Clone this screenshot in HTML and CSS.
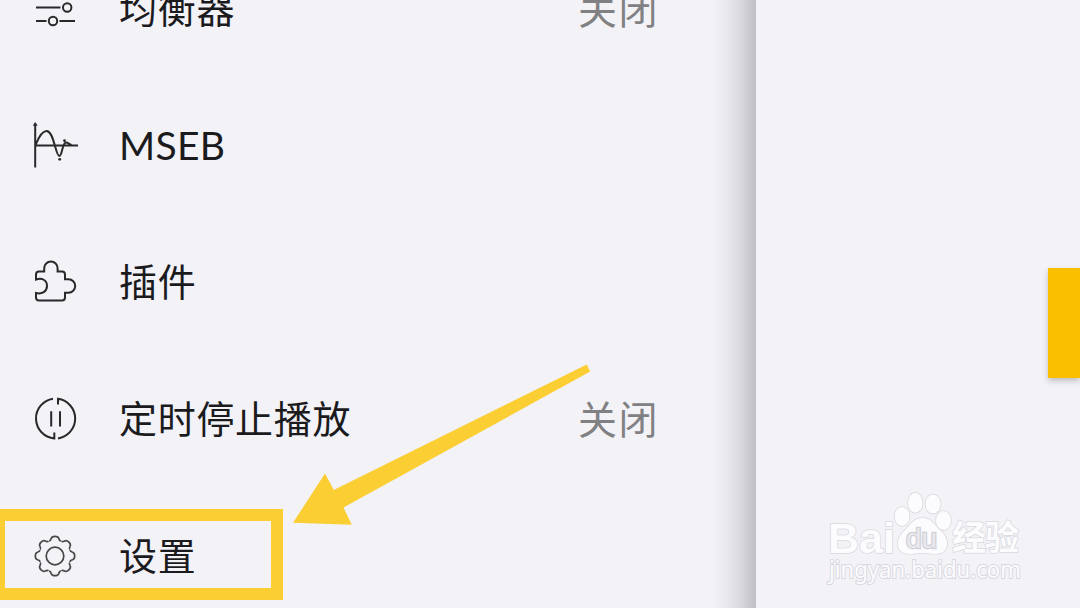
FILE: index.html
```html
<!DOCTYPE html>
<html lang="zh-CN">
	<head>
		<meta charset="UTF-8">
		<title>设置</title>
		<link rel="stylesheet" href="styles.css">
	</head>
	<body>
		<div class="screen">
			<div class="drawer">
				<ul class="menu">
					<li>
						<svg class="icon" viewBox="0 0 46 46">
							<path d="M4 8.500h8M21 8.500h22M4 22.500h24.500M4 36h10.500M27.500 36h15.500"/>
							<circle cx="16.500" cy="8.500" r="4.200"/>
							<circle cx="35.200" cy="22.500" r="4.200"/>
							<circle cx="21" cy="36" r="4.200"/>
						</svg>
						<span class="name">均衡器</span>
						<span class="state">关闭</span>
					</li>
					<li>
						<svg class="icon" viewBox="0 0 46 46">
							<path d="M3.200 1.500V45.500M3.200 23.600H46M3.800 22.500C7 14.500 11 9 14.600 9C22 9 23.500 34 27.300 34C30.500 34 30 20.500 34 20.500C36.500 20.500 36.500 22 39.500 23"/>
							<path class="dot" d="M3.200 0L5.600 3.800H.8z"/>
							<circle class="dot" cx="27.700" cy="37.300" r="1.400"/>
							<circle class="dot" cx="32.500" cy="18.700" r="1.400"/>
						</svg>
						<span class="name latin">MSEB</span>
					</li>
					<li>
						<svg class="icon" viewBox="0 0 46 46">
							<path d="M4 19.500V15.500Q4 12.500 7 12.500H12.200V9.200A6.700 6.700 0 0 1 25.600 9.200V12.500H30Q33 12.500 33 15.500V20.300H36.500A6.700 6.700 0 0 1 36.500 33.700H33V38.500Q33 41.500 30 41.500H7Q4 41.500 4 38.500V34C10 35.500 15 32.500 15 27C15 21 10 18.500 4 20.500z"/>
						</svg>
						<span class="name">插件</span>
					</li>
					<li>
						<svg class="icon" viewBox="0 0 46 46">
							<path d="M21 2.700A20 20 0 0 0 22.300 42.400V36.500M26 8.500V2.800A20 20 0 0 1 26 42.400M19.200 15.200V30.500M28 15.200V30.500"/>
						</svg>
						<span class="name">定时停止播放</span>
						<span class="state">关闭</span>
					</li>
					<li>
						<svg class="icon gear" viewBox="-23 -23 46 46">
							<defs>
								<path id="tooth" d="M-5.900 -15.100C-4.700 -15.100 -4.200 -15.900 -3.800 -17.500C-3 -20.400 3 -20.400 3.800 -17.500C4.200 -15.900 4.700 -15.100 5.900 -15.100"/>
							</defs>
							<use href="#tooth"/>
							<use href="#tooth" transform="rotate(45)"/>
							<use href="#tooth" transform="rotate(90)"/>
							<use href="#tooth" transform="rotate(135)"/>
							<use href="#tooth" transform="rotate(180)"/>
							<use href="#tooth" transform="rotate(225)"/>
							<use href="#tooth" transform="rotate(270)"/>
							<use href="#tooth" transform="rotate(315)"/>
							<circle r="8.800"/>
						</svg>
						<span class="name">设置</span>
					</li>
				</ul>
			</div>
			<div class="page">
				<div class="tab"></div>
			</div>
			<div class="frame"></div>
			<svg class="arrow" viewBox="0 0 300 162">
				<path d="M293.700 1.500L297.200 8.500L50.500 144.500L58.800 161.800L0 159.800L32 110.500L40.800 127z"/>
			</svg>
			<svg class="logo" viewBox="0 0 220 115">
				<text class="bai" x="13" y="72.500" textLength="67" lengthAdjust="spacingAndGlyphs">Bai</text>
				<ellipse cx="87" cy="36.500" rx="7.500" ry="9.500"/>
				<ellipse cx="100.300" cy="22.800" rx="7.300" ry="10"/>
				<ellipse cx="118" cy="24" rx="7.600" ry="9.500"/>
				<ellipse cx="128.500" cy="40.500" rx="7.500" ry="9.500"/>
				<path d="M107.500 38C98 38 96 45 90 50C82 57 81 66 85.500 71C91 76 99 73 107.500 73C116 73 124 76 129.500 71C134 66 133 57 125 50C119 45 117 38 107.500 38z"/>
				<text class="du" x="91" y="67.500" textLength="31" lengthAdjust="spacingAndGlyphs">du</text>
				<text class="jy" x="137" y="70" textLength="67">经验</text>
				<text class="url" x="14" y="98" textLength="192" lengthAdjust="spacingAndGlyphs">jingyan.baidu.com</text>
			</svg>
		</div>
	</body>
</html>
```
FILE: styles.css
```css
*{
	margin: 0;
	padding: 0;
	box-sizing: border-box;
}
li{
	list-style: none;
}
body{
	background: #f3f2f7;
	font-family: "Noto Sans CJK SC", sans-serif;
	color: #1b1b1e;
}
.screen{
	width: 1080px;
	height: 608px;
	display: flex;
	position: relative;
	overflow: hidden;
}
.drawer{
	width: 756px;
	height: 608px;
	background: linear-gradient(to right, rgba(0,0,0,0) 712px, rgba(0,0,0,.035) 725px, rgba(0,0,0,.1) 740px, rgba(0,0,0,.21) 756px);
}
/* the list is scrolled, first row is cut off */
.menu{
	margin-top: -60px;
}
.menu li{
	height: 136.8px;
	display: flex;
	align-items: center;
	padding: 0 97px 0 32px;
}
.icon{
	width: 46px;
	height: 46px;
	fill: none;
	stroke: #29292c;
	stroke-width: 2;
	flex: none;
}
.icon .dot{
	fill: #29292c;
	stroke: none;
}
.gear{
	stroke: #48484b;
	stroke-width: 1.7;
}
.name{
	margin-left: 41px;
	padding-bottom: 3px;
	font-size: 38px;
	line-height: 50px;
	letter-spacing: .7px;
	white-space: nowrap;
}
.latin{
	padding-bottom: 1px;
	font-family: Lato, sans-serif;
	font-size: 39px;
	letter-spacing: .3px;
}
.state{
	margin-left: auto;
	padding-bottom: 3px;
	font-size: 39px;
	line-height: 50px;
	letter-spacing: 1.5px;
	color: #818183;
}
.page{
	flex: 1;
	display: flex;
	justify-content: flex-end;
	padding-top: 268px;
}
.tab{
	width: 32px;
	height: 110px;
	background: #fac000;
	box-shadow: 0 3px 6px rgba(0,0,0,.22);
}
.frame{
	position: absolute;
	left: -7px;
	top: 509px;
	width: 290px;
	height: 91px;
	border: 12px solid #fbce34;
}
.arrow{
	position: absolute;
	left: 293px;
	top: 363px;
	width: 300px;
	height: 162px;
	fill: #fbce34;
}
.logo{
	position: absolute;
	left: 815px;
	top: 480px;
	width: 220px;
	height: 115px;
	fill: #fcfcfe;
	stroke: #d9d8de;
	stroke-width: 1.5;
	paint-order: stroke;
}
.bai{
	font: bold 43px "Liberation Sans", sans-serif;
}
.du{
	font: 27px "Liberation Sans", sans-serif;
	fill: #e9e8ee;
	stroke: #d2d1d7;
	stroke-width: 2.5;
}
.jy{
	font: bold 34px "Noto Sans CJK SC", sans-serif;
}
.url{
	font: 23px "Noto Sans", sans-serif;
	stroke-width: 2;
}
```
